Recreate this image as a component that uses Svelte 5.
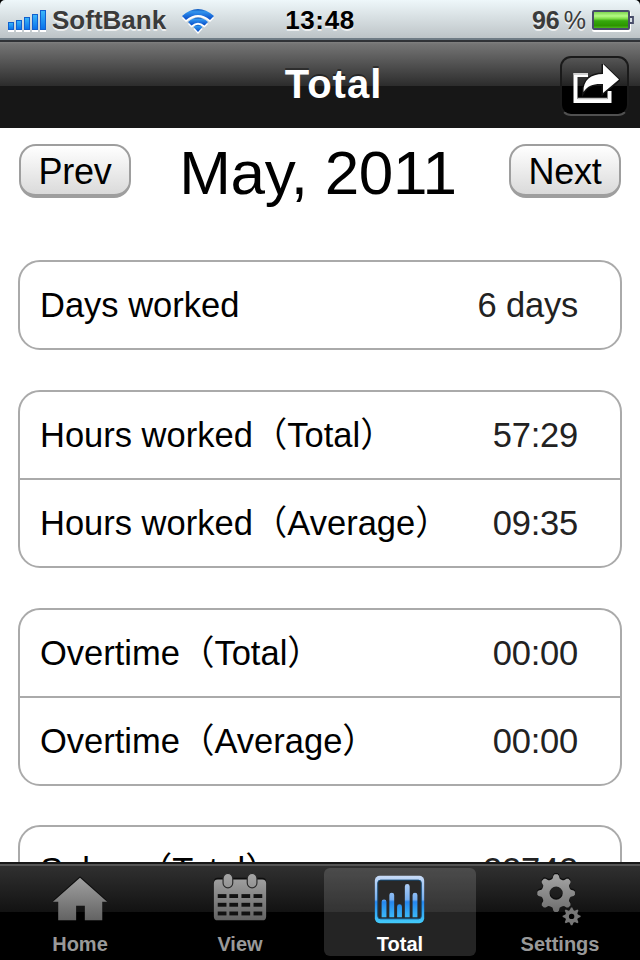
<script lang="ts">
  type Row = { label: string; value: string };

  const groups: Row[][] = [
    [{ label: 'Days worked', value: '6 days' }],
    [
      { label: 'Hours worked（Total）', value: '57:29' },
      { label: 'Hours worked（Average）', value: '09:35' },
    ],
    [
      { label: 'Overtime（Total）', value: '00:00' },
      { label: 'Overtime（Average）', value: '00:00' },
    ],
    [{ label: 'Salary（Total）', value: '22742' }],
  ];

  const tabs = ['Home', 'View', 'Total', 'Settings'];
  let activeTab = $state('Total');

  const months = ['January', 'February', 'March', 'April', 'May', 'June', 'July', 'August', 'September', 'October', 'November', 'December'];
  let month = $state(4);
  let year = $state(2011);

  function moveMonth(step: number) {
    const total = year * 12 + month + step;
    year = Math.floor(total / 12);
    month = total % 12;
  }

  // outline of a gear with rounded teeth
  function gearPath(cx: number, cy: number, outer: number, inner: number, hole: number, teeth: number): string {
    const points: string[] = [];
    const step = (Math.PI * 2) / teeth;
    for (let i = 0; i < teeth; i++) {
      const mid = i * step - Math.PI / 2;
      for (const [angle, r] of [[-0.42, inner], [-0.3, inner + 0.6], [-0.2, outer - 1.2], [-0.1, outer], [0.1, outer], [0.2, outer - 1.2], [0.3, inner + 0.6], [0.42, inner]]) {
        const a = mid + angle * step;
        points.push(`${(cx + r * Math.cos(a)).toFixed(2)} ${(cy + r * Math.sin(a)).toFixed(2)}`);
      }
    }
    return `M${points.join('L')}Z M${cx - hole} ${cy}a${hole} ${hole} 0 1 0 ${hole * 2} 0a${hole} ${hole} 0 1 0 ${-hole * 2} 0Z`;
  }
</script>

<div class="screen">
  <div class="status-bar">
    <div class="carrier">
      <svg class="signal" width="40" height="22" viewBox="0 0 40 22">
        <defs>
          <linearGradient id="signal" x1="0" y1="0" x2="0" y2="1">
            <stop offset="0" stop-color="#3cb8fa" />
            <stop offset="1" stop-color="#0870ea" />
          </linearGradient>
        </defs>
        {#each [8, 10, 13, 16, 20] as h, i}
          <rect x={i * 8} y={21 - h} width="6" height={h + 1} fill="#fff" />
          <rect x={i * 8 + 0.5} y={20.5 - h} width="5" height={h - 1} fill="url(#signal)" stroke="#1160cf" />
        {/each}
      </svg>
      <span class="carrier-name">SoftBank</span>
      <svg class="wifi" width="34" height="28" viewBox="0 0 34 28">
        <defs>
          <linearGradient id="wifi" x1="0" y1="0" x2="0" y2="1">
            <stop offset="0" stop-color="#0c55bd" />
            <stop offset="0.25" stop-color="#3194ee" />
            <stop offset="1" stop-color="#0648c6" />
          </linearGradient>
        </defs>
        <g fill="#fff" transform="translate(0 2)">
          <path d="M1 8Q17-6 33 8L29 12Q17 2 5 12Z" />
          <path d="M7 14Q17 5 27 14L23.500 17.500Q17 12 10.500 17.500Z" />
          <path d="M12.500 19Q17 14.500 21.500 19L17 24Z" />
        </g>
        <g fill="url(#wifi)">
          <path d="M1 8Q17-6 33 8L29 12Q17 2 5 12Z" />
          <path d="M7 14Q17 5 27 14L23.500 17.500Q17 12 10.500 17.500Z" />
          <path d="M12.500 19Q17 14.500 21.500 19L17 24Z" />
        </g>
      </svg>
    </div>
    <span class="clock">13:48</span>
    <div class="battery-box">
      <span class="percent">96<span class="sign">%</span></span>
      <svg class="battery" width="43" height="22" viewBox="0 0 43 22">
        <defs>
          <linearGradient id="charge" x1="0" y1="0" x2="0" y2="1">
            <stop offset="0" stop-color="#7fd651" />
            <stop offset="0.25" stop-color="#b5f985" />
            <stop offset="0.42" stop-color="#7ddb45" />
            <stop offset="0.55" stop-color="#36a90d" />
            <stop offset="0.85" stop-color="#2c9500" />
            <stop offset="1" stop-color="#4bb51d" />
          </linearGradient>
        </defs>
        <rect x="1" y="2" width="37" height="19" rx="1.500" fill="none" stroke="#fff" stroke-width="2" />
        <rect x="1" y="1" width="36" height="18" rx="1" fill="#e4f2dc" stroke="#484d6a" stroke-width="2" />
        <rect x="2" y="2" width="34" height="16" fill="url(#charge)" />
        <path d="M38 7h3v6h-3" fill="#dce3e8" stroke="#484d6a" stroke-width="1.800" />
      </svg>
    </div>
  </div>

  <header class="nav-bar">
    <h1>Total</h1>
    <button class="share" aria-label="Share">
      <svg width="50" height="44" viewBox="0 0 50 44">
        <path d="M18 11H5.500V37H39.500V27" fill="none" stroke="#fff" stroke-width="4" />
        <path d="M18 10H3.500M7.500 34.500H37.500" stroke="#c4c4c4" stroke-width="1.500" />
        <path d="M13.500 28C13.500 16 21 10 33 10V1L49 16L33 29V20C24 19.500 18 21 13.500 28Z" fill="#141414" stroke="#141414" stroke-width="3" />
        <path d="M13.500 28C13 16 21 10 33 10V0L49 15.500L33 29V20C24 19.500 18 21 13.500 28Z" fill="#fff" />
      </svg>
    </button>
  </header>

  <main>
    <div class="month">
      <button class="month-button" onclick={() => moveMonth(-1)}>Prev</button>
      <h2>{months[month]}, {year}</h2>
      <button class="month-button" onclick={() => moveMonth(1)}>Next</button>
    </div>

    <div class="groups">
      {#each groups as group}
        <ul class="group">
          {#each group as row}
            <li>
              <span class="label">{row.label}</span>
              <span class="value">{row.value}</span>
            </li>
          {/each}
        </ul>
      {/each}
    </div>
  </main>

  <nav class="tab-bar">
    {#each tabs as tab}
      <button class="tab" class:active={activeTab === tab} onclick={() => (activeTab = tab)}>
        <svg width="64" height="62" viewBox="0 0 64 62">
          <defs>
            <linearGradient id="grey" gradientUnits="userSpaceOnUse" x1="0" y1="6" x2="0" y2="56">
              <stop offset="0" stop-color="#a6a6a6" />
              <stop offset="1" stop-color="#606060" />
            </linearGradient>
            <linearGradient id="blue" gradientUnits="userSpaceOnUse" x1="0" y1="8" x2="0" y2="57">
              <stop offset="0" stop-color="#c9dcf8" />
              <stop offset="0.5" stop-color="#78b0f0" />
              <stop offset="0.55" stop-color="#2687ef" />
              <stop offset="1" stop-color="#43ccfb" />
            </linearGradient>
          </defs>
          {#if tab === 'Home'}
            <path d="M32 8.500L4 33.500H9.500V54H28V39H37V54H55V33.500H60Z" fill="#0d0d0d" />
            <path d="M32 10L4 35H9.500V54H28V39H37V54H55V35H60Z" fill="url(#grey)" />
          {:else if tab === 'View'}
            <rect x="5" y="10" width="54" height="42" rx="4" fill="#0d0d0d" />
            <rect x="5" y="12" width="54" height="42" rx="4" fill="url(#grey)" />
            <g fill="url(#grey)" stroke="#2a2a2a" stroke-width="1.200">
              <rect x="14.500" y="5.500" width="10" height="15" rx="5" />
              <rect x="39.500" y="5.500" width="10" height="15" rx="5" />
            </g>
            {#each [27, 36, 45] as y}
              {#each [9, 21, 33.5, 46] as x}
                <rect {x} {y} width="9" height="4" fill="#111" />
              {/each}
            {/each}
          {:else if tab === 'Total'}
            <rect x="6" y="8" width="51" height="49" rx="5" fill="url(#blue)" />
            <rect x="9" y="12.500" width="45" height="40" rx="3" fill="#282828" stroke="#164e78" />
            <path d="M13 51V35a2.500 2.500 0 0 1 5 0V51Z M21 51V28a2.500 2.500 0 0 1 5 0V51Z M29 51V40a2.500 2.500 0 0 1 5 0V51Z M37 51V19a2.500 2.500 0 0 1 5 0V51Z M45 51V28a2.500 2.500 0 0 1 5 0V51Z" fill="url(#blue)" />
          {:else}
            <path d={gearPath(28, 24.5, 19.5, 15, 6.5, 8)} fill="#0d0d0d" fill-rule="evenodd" />
            <path d={gearPath(28, 26, 19.5, 15, 6.8, 8)} fill="url(#grey)" fill-rule="evenodd" />
            <path d={gearPath(44, 50, 9.3, 6.6, 2.8, 8)} fill="#777" fill-rule="evenodd" />
          {/if}
        </svg>
        <span>{tab}</span>
      </button>
    {/each}
  </nav>
</div>

<style>
  :global(body) {
    background: #fff;
  }
  .screen {
    display: flex;
    flex-direction: column;
    width: 640px;
    height: 960px;
    overflow: hidden;
    background: #000;
    font-family: "Liberation Sans", "Noto Sans CJK JP", sans-serif;
  }
  button {
    border: 0;
    padding: 0;
    background: none;
    font-family: inherit;
  }
  .status-bar {
    display: grid;
    grid-template-columns: 1fr auto 1fr;
    align-items: center;
    box-sizing: border-box;
    height: 40px;
    padding: 1px 5px 0 8px;
    border-bottom: 2px solid #6f7c85;
    border-radius: 5px 5px 0 0;
    background: linear-gradient(#eef7fa, #bdc4c7);
    color: #3b3b3b;
    font-size: 26px;
    font-weight: bold;
    line-height: 36px;
    text-shadow: 0 2px 0 rgba(255, 255, 255, 0.7);
  }
  .carrier, .battery-box {
    display: flex;
    align-items: center;
  }
  .signal {
    margin-top: 2px;
  }
  .carrier-name {
    margin-left: 4px;
  }
  .wifi {
    margin: 4px 0 0 15px;
  }
  .clock {
    margin-right: 3px;
    color: #000;
    letter-spacing: 0.6px;
  }
  .battery-box {
    justify-content: flex-end;
  }
  .battery {
    margin-top: 2px;
  }
  .percent {
    margin-right: 6px;
    font-size: 25px;
  }
  .sign {
    margin-left: 4px;
    font-weight: normal;
  }
  .nav-bar {
    display: grid;
    grid-template-columns: 1fr auto 1fr;
    align-items: center;
    box-sizing: border-box;
    height: 88px;
    padding: 1px 11px 0 0;
    border-top: 2px solid #303236;
    background: linear-gradient(#818181, #747474 2px, #2c2c2c 44px, #171717 44px);
    color: #fff;
  }
  h1 {
    grid-column: 2;
    margin: 0 0 4px 38px;
    font-size: 40px;
    line-height: 46px;
    letter-spacing: 1px;
    text-shadow: 0 -2px 0 rgba(0, 0, 0, 0.4);
  }
  .share {
    display: flex;
    align-items: center;
    justify-content: center;
    justify-self: end;
    box-sizing: border-box;
    width: 69px;
    height: 60px;
    border: 2px solid #1a1a1a;
    border-bottom-color: #505050;
    border-radius: 11px;
    background: linear-gradient(#555, #222 28px, #000 28px);
  }
  main {
    flex: 1;
    min-height: 0;
    overflow: hidden;
    background: #fff;
  }
  .month {
    display: flex;
    justify-content: space-between;
    align-items: flex-start;
    height: 62px;
    padding: 16px 19px 0;
  }
  .month-button {
    box-sizing: border-box;
    width: 112px;
    height: 54px;
    padding-top: 3px;
    border: 2px solid #9e9e9e;
    border-bottom-width: 4px;
    border-radius: 17px;
    background: linear-gradient(#fff, #dadada);
    color: #000;
    font-size: 36px;
    line-height: 45px;
    letter-spacing: -0.3px;
  }
  h2 {
    margin: -5px 4px 0 0;
    color: #000;
    font-size: 62px;
    font-weight: normal;
    line-height: 68px;
    letter-spacing: -0.3px;
  }
  .groups {
    display: flex;
    flex-direction: column;
    gap: 39.8px;
    padding: 54px 18px 0;
  }
  .group {
    margin: 0;
    padding: 0;
    border: 2px solid #aaa;
    border-radius: 22px;
    list-style: none;
  }
  li {
    display: flex;
    justify-content: space-between;
    align-items: center;
    height: 86px;
    padding: 0 42px 0 20px;
    font-size: 34.5px;
    line-height: 40px;
  }
  li + li {
    border-top: 2px solid #aaa;
  }
  .label {
    color: #000;
  }
  .value {
    color: #222;
    letter-spacing: -0.2px;
  }
  .tab-bar {
    display: grid;
    grid-template-columns: repeat(4, 152px);
    justify-content: space-between;
    box-sizing: border-box;
    height: 98px;
    padding: 4px;
    border-top: 2px solid #181818;
    background: linear-gradient(#555, #555 2px, #303030 2px, #121212 48px, #000 48px);
  }
  .tab {
    display: flex;
    flex-direction: column;
    align-items: center;
    height: 88px;
    border-radius: 6px;
    color: #999;
    font-size: 20px;
    font-weight: bold;
    line-height: 24px;
  }
  .tab span {
    margin-top: 4px;
  }
  .tab.active {
    background: rgba(255, 255, 255, 0.14);
    color: #fff;
  }
</style>
